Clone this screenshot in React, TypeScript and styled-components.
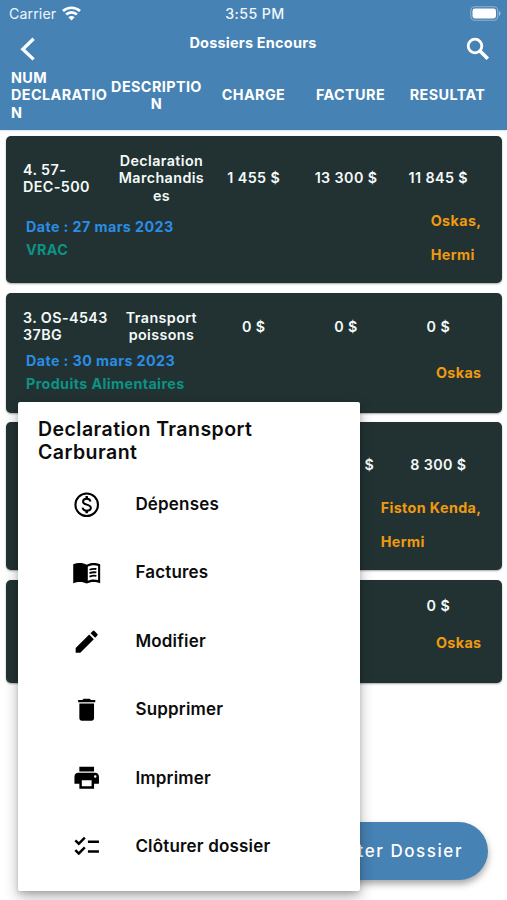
import React from "react";
import styled, { createGlobalStyle } from "styled-components";
import { MdEdit, MdDelete, MdPrint, MdChecklist } from "react-icons/md";

const GlobalStyle = createGlobalStyle`
  * { box-sizing: border-box; }
  body { margin: 0; background: #fff; overflow: hidden; }
`;

const Screen = styled.div`
  position: relative;
  width: 507px;
  height: 900px;
  overflow: hidden;
  background: #fff;
  font-family: Inter, "Liberation Sans", sans-serif;
  font-size: 14.3px;
  font-weight: 600;
  line-height: 17.3px;
  letter-spacing: 0.4px;
`;

const Header = styled.header`
  height: 130px;
  background: #4682b4;
  color: #fff;
  box-shadow: 0 0 2px rgba(70, 130, 180, 0.5);
`;

const StatusBar = styled.div`
  display: grid;
  grid-template-columns: 1fr auto 1fr;
  align-items: center;
  height: 27px;
  padding: 0 6px 0 9px;
  font-weight: 500;
  font-size: 14.2px;
  color: #f0f6fb;
`;

const Carrier = styled.div`
  display: flex;
  align-items: center;
  gap: 6px;
  font-weight: 400;
  letter-spacing: 0.1px;
`;

const BatterySlot = styled.div`
  display: flex;
  justify-content: flex-end;
`;

const NavBar = styled.div`
  display: grid;
  grid-template-columns: 40px 1fr 40px;
  height: 42px;
  padding: 0 14px 0 12px;
`;

const NavIcon = styled.div<{ $end?: boolean }>`
  display: flex;
  justify-content: ${(p) => (p.$end ? "flex-end" : "flex-start")};
  align-items: center;
  height: 44px;
`;

const Title = styled.h1`
  margin: 7px 0 0 1px;
  font-size: 14.5px;
  font-weight: 700;
  line-height: 17px;
  letter-spacing: 0.2px;
  text-align: center;
`;

const Columns = styled.div`
  display: grid;
  grid-template-columns: repeat(5, 97px);
  align-items: center;
  height: 52px;
  padding-left: 11px;
  font-size: 14.4px;
  font-weight: 700;
`;

const Cell = styled.div<{ $start?: boolean }>`
  text-align: ${(p) => (p.$start ? "left" : "center")};
  white-space: pre;
`;

const List = styled.main`
  display: flex;
  flex-direction: column;
  gap: 9.7px;
  padding: 5.5px 5px 0 6px;
`;

const Card = styled.article<{ $height: number; $top: number }>`
  height: ${(p) => p.$height}px;
  padding: ${(p) => p.$top}px 17px 0;
  border-radius: 5px;
  background: #223232;
  box-shadow: 0 1px 2px rgba(0, 0, 0, 0.35);
  color: #f4fafa;
`;

const Figures = styled.div<{ $height: number }>`
  display: grid;
  grid-template-columns: repeat(5, 92.3px);
  align-items: center;
  height: ${(p) => p.$height}px;
`;

const Details = styled.div`
  display: flex;
  justify-content: space-between;
  padding: 0 3.5px 0 3px;
  font-weight: 700;
`;

const Meta = styled.div<{ $top: number }>`
  padding-top: ${(p) => p.$top}px;
  line-height: 23px;
  letter-spacing: 0.4px;
`;

const DateLine = styled.div`
  color: #2a8de6;
`;

const Category = styled.div`
  color: #0c9384;
`;

const People = styled.div<{ $top: number }>`
  margin-top: ${(p) => p.$top}px;
  line-height: 34.3px;
  color: #f09a10;
  white-space: pre;
`;

const AddButton = styled.button`
  position: absolute;
  right: 19.5px;
  bottom: 20px;
  display: flex;
  align-items: center;
  justify-content: flex-end;
  width: 196px;
  height: 58.5px;
  padding: 0 24.5px;
  border: 0;
  border-radius: 30px;
  background: #4682b4;
  box-shadow: 0 4px 7px rgba(0, 0, 0, 0.35);
  color: #fff;
  font: 500 17px Inter, sans-serif;
  letter-spacing: 1.55px;
  white-space: nowrap;
`;

const Menu = styled.aside`
  position: absolute;
  left: 18px;
  top: 402px;
  width: 342px;
  height: 488.5px;
  padding: 16px 20px;
  border-radius: 2px;
  background: #fff;
  box-shadow: 0 6px 14px rgba(0, 0, 0, 0.3), 0 2px 4px rgba(0, 0, 0, 0.12);
  color: #0c0c0c;
`;

const MenuTitle = styled.h2`
  margin: 0;
  font-size: 19.5px;
  font-weight: 600;
  line-height: 23px;
  letter-spacing: 0.45px;
`;

const MenuItem = styled.div`
  display: flex;
  align-items: center;
  gap: 34px;
  height: 68.4px;
  padding-left: 34px;
  font-size: 17px;
  font-weight: 600;
  letter-spacing: 0.18px;

  svg {
    color: #000;
  }
`;

const MenuList = styled.div`
  padding-top: 6.4px;
`;

const BackIcon = () => (
  <svg width="30" height="30" viewBox="0 0 30 30" fill="none" stroke="#fff" strokeWidth="3.3">
    <path d="M21.6 4.8 10.8 15.2l10.8 10.2" />
  </svg>
);

const SearchIcon = () => (
  <svg width="30" height="30" viewBox="0 0 30 30" fill="none" stroke="#fff">
    <circle cx="12" cy="12" r="6.8" strokeWidth="2.8" />
    <path d="m17 17 7.8 7.8" strokeWidth="3.6" />
  </svg>
);

const WifiIcon = () => (
  <svg width="19" height="15" viewBox="0 0 19 15" fill="none" stroke="#fff" strokeWidth="2.7">
    <path d="M1 5.1C5.8.6 13.2.6 18 5.1" />
    <path d="M4.1 8.6c3.1-2.9 7.7-2.9 10.8 0" />
    <path d="M6.4 11.3c1.9-1.6 4.3-1.6 6.2 0L9.5 14.6z" fill="#fff" stroke="none" />
  </svg>
);

const BatteryIcon = () => (
  <svg width="31" height="15" viewBox="0 0 31 15">
    <rect x=".8" y=".8" width="27" height="13.4" rx="4" fill="none" stroke="#fff" strokeOpacity=".4" strokeWidth="1.1" />
    <rect x="2.5" y="2.5" width="23.5" height="10" rx="2.4" fill="#fff" />
    <path d="M29 5.2c2 .6 2 4 0 4.6z" fill="#fff" fillOpacity=".5" />
  </svg>
);

const CoinIcon = ({ size }: { size: number }) => (
  <svg width={size} height={size} viewBox="0 0 24 24" fill="none" stroke="currentColor">
    <circle cx="12" cy="12" r="9.2" strokeWidth="1.7" />
    <path d="M12 5v2.2M12 16.8V19" strokeWidth="2" />
    <path d="M15.1 9.4C14.8 8 13.7 7.2 12 7.2c-1.8 0-3 .9-3 2.3 0 3.2 6.4 1.7 6.4 5 0 1.5-1.3 2.4-3.3 2.4-1.9 0-3.2-.9-3.4-2.5" strokeWidth="1.6" />
  </svg>
);

const BookIcon = ({ size }: { size: number }) => (
  <svg width={size} height={size} viewBox="0 0 24 24">
    <path
      fill="currentColor"
      fillRule="evenodd"
      d="M1 5.2c1.7-.9 3.6-1.2 5.5-1.2S10.55 4.4 12 5.5C13.45 4.4 15.6 4 17.5 4s3.8.3 5.5 1.2v15.4c-1.7-.9-3.6-1.1-5.5-1.1-1.8 0-4.1.4-5.5 1.4-1.45-1-3.55-1.4-5.5-1.4-1.9 0-3.8.2-5.5 1.1zM21.3 6.5c-2.7-.9-6.3-.6-8.4.7v11.3c2.4-1.1 5.8-1.3 8.4-.6z"
    />
    <path d="M14.3 9.6q2.8-1.1 5.6-.6M14.3 12.4q2.8-1.1 5.6-.6M14.3 15.2q2.8-1.1 5.6-.6" fill="none" stroke="currentColor" strokeWidth="1.5" />
  </svg>
);

const headings = ["NUM\nDECLARATIO\nN", "DESCRIPTIO\nN", "CHARGE", "FACTURE", "RESULTAT"];

const dossiers = [
  {
    height: 147.7, top: 13, row: 59, metaTop: 7, peopleTop: -3.7, cells: ["4. 57-\nDEC-500", "Declaration\nMarchandis\nes", "1 455 $", "13 300 $", "11 845 $"],
    date: "27 mars 2023", category: "VRAC", people: "Oskas,\nHermi",
  },
  {
    height: 119.8, top: 13, row: 41, metaTop: 2.5, peopleTop: 9, cells: ["3. OS-4543\n37BG", "Transport\npoissons", "0 $", "0 $", "0 $"],
    date: "30 mars 2023", category: "Produits Alimentaires", people: "Oskas",
  },
  {
    height: 148, top: 13, row: 59, metaTop: 7, peopleTop: -3.7, cells: ["", "", "", "9 300 $", "8 300 $"],
    date: "", category: "", people: "Fiston Kenda,\nHermi",
  },
  {
    height: 102.7, top: 13, row: 25, metaTop: 2.5, peopleTop: 8, cells: ["", "", "", "", "0 $"],
    date: "", category: "", people: "Oskas",
  },
];

const actions = [
  { icon: CoinIcon, label: "Dépenses" },
  { icon: BookIcon, label: "Factures" },
  { icon: MdEdit, label: "Modifier" },
  { icon: MdDelete, label: "Supprimer" },
  { icon: MdPrint, label: "Imprimer" },
  { icon: MdChecklist, label: "Clôturer dossier" },
];

export default function App() {
  return (
    <Screen>
      <GlobalStyle />
      <Header>
        <StatusBar>
          <Carrier>Carrier <WifiIcon /></Carrier>
          <span>3:55 PM</span>
          <BatterySlot><BatteryIcon /></BatterySlot>
        </StatusBar>
        <NavBar>
          <NavIcon><BackIcon /></NavIcon>
          <Title>Dossiers Encours</Title>
          <NavIcon $end><SearchIcon /></NavIcon>
        </NavBar>
        <Columns>
          {headings.map((h, i) => <Cell key={h} $start={i === 0}>{h}</Cell>)}
        </Columns>
      </Header>
      <List>
        {dossiers.map((d, index) => (
          <Card key={index} $height={d.height} $top={d.top}>
            <Figures $height={d.row}>
              {d.cells.map((c, i) => <Cell key={i} $start={i === 0}>{c}</Cell>)}
            </Figures>
            <Details>
              <Meta $top={d.metaTop}>
                {d.date && <DateLine>Date : {d.date}</DateLine>}
                <Category>{d.category}</Category>
              </Meta>
              <People $top={d.peopleTop}>{d.people}</People>
            </Details>
          </Card>
        ))}
      </List>
      <AddButton>Ajouter Dossier</AddButton>
      <Menu>
        <MenuTitle>Declaration Transport Carburant</MenuTitle>
        <MenuList>
          {actions.map(({ icon: Icon, label }) => (
            <MenuItem key={label}><Icon size={29.4} />{label}</MenuItem>
          ))}
        </MenuList>
      </Menu>
    </Screen>
  );
}
